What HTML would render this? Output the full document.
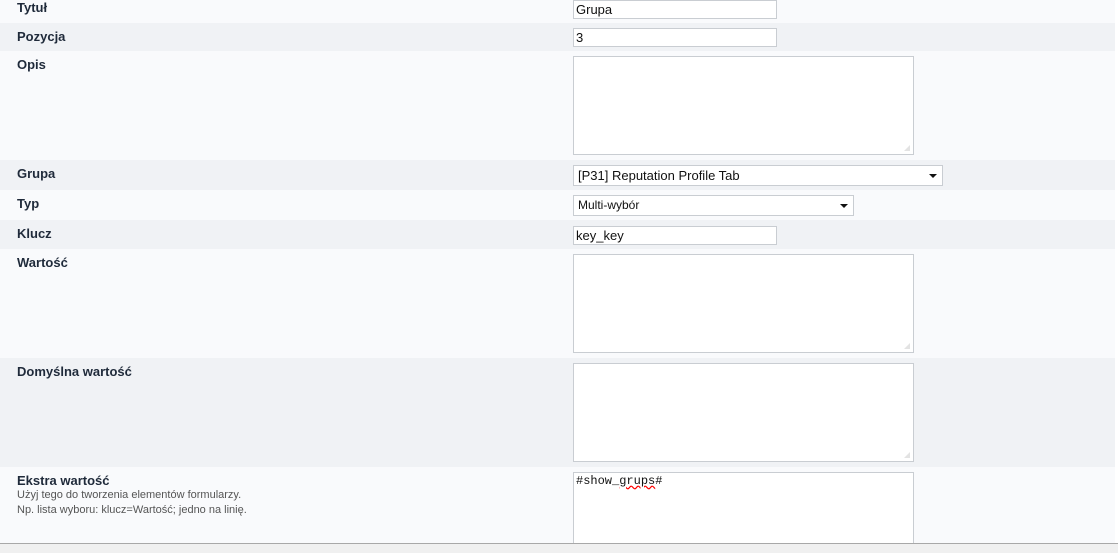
<!DOCTYPE html>
<html style="overflow:hidden;height:553px"><head><meta charset="utf-8"><style>
body{margin:0;width:1118px;height:553px;overflow:hidden;background:#fff;font-family:"Liberation Sans",Arial,sans-serif;position:relative}
.r{position:absolute;left:0;width:1115px}
.a{background:#f9fafc}.b{background:#f0f2f5}
.l{position:absolute;left:17px;font-weight:bold;font-size:13px;color:#1f2a3a}
.in{position:absolute;box-sizing:border-box;border:1px solid #c9cdd2;background:#fff;font-size:13px;color:#111;padding:1px 2px;white-space:nowrap}
.ta{position:absolute;box-sizing:border-box;border:1px solid #c9cdd2;background:#fff}
.ta:after{content:"";position:absolute;right:3px;bottom:3px;width:6px;height:6px;background:radial-gradient(circle,#999 0.6px,transparent 0.8px) 0 0/2px 2px;clip-path:polygon(100% 0,100% 100%,0 100%)}
.sel{position:absolute;box-sizing:border-box;border:1px solid #c9cdd2;background:#fff;font-size:13px;color:#111;padding:2px 4px}
.sel:after{content:"";position:absolute;right:5px;top:8px;border-left:4px solid transparent;border-right:4px solid transparent;border-top:4px solid #111}
.h{position:absolute;left:17px;font-size:11px;color:#555}
</style></head><body>
<div class="r a" style="top:0;height:23px"></div>
<div class="r b" style="top:23px;height:28px"></div>
<div class="r a" style="top:51px;height:109px"></div>
<div class="r b" style="top:160px;height:30px"></div>
<div class="r a" style="top:190px;height:30px"></div>
<div class="r b" style="top:220px;height:29px"></div>
<div class="r a" style="top:249px;height:109px"></div>
<div class="r b" style="top:358px;height:109px"></div>
<div class="r a" style="top:467px;height:76px"></div>
<div class="l" style="top:0px">Tytuł</div>
<div class="l" style="top:29px">Pozycja</div>
<div class="l" style="top:57px">Opis</div>
<div class="l" style="top:166px">Grupa</div>
<div class="l" style="top:196px">Typ</div>
<div class="l" style="top:226px">Klucz</div>
<div class="l" style="top:255px">Wartość</div>
<div class="l" style="top:364px">Domyślna wartość</div>
<div class="l" style="top:473px">Ekstra wartość</div>
<div class="h" style="top:489px">Użyj tego do tworzenia elementów formularzy.</div>
<div class="h" style="top:504px">Np. lista wyboru: klucz=Wartość; jedno na linię.</div>
<div class="in" style="left:573px;top:0;width:204px;height:19px">Grupa</div>
<div class="in" style="left:573px;top:28px;width:204px;height:19px">3</div>
<div class="ta" style="left:573px;top:56px;width:341px;height:99px"></div>
<div class="sel" style="left:573px;top:165px;width:370px;height:21px">[P31] Reputation Profile Tab</div>
<div class="sel" style="left:573px;top:195px;width:281px;height:21px;font-size:12px">Multi-wybór</div>
<div class="in" style="left:573px;top:226px;width:204px;height:19px">key_key</div>
<div class="ta" style="left:573px;top:254px;width:341px;height:99px"></div>
<div class="ta" style="left:573px;top:363px;width:341px;height:99px"></div>
<div style="position:absolute;left:573px;top:472px;width:341px;height:71px;box-sizing:border-box;border:1px solid #c9cdd2;border-bottom:none;background:#fff;font-family:'Liberation Mono',monospace;font-size:12px;padding:1px 2px;color:#111">#show_<span style="text-decoration:underline wavy red">grups</span>#</div>
<div style="position:absolute;left:0;top:543px;width:1118px;height:10px;background:#f0f0f0;border-top:1px solid #a8a8a8;box-sizing:border-box;z-index:5"></div>
</body></html>
